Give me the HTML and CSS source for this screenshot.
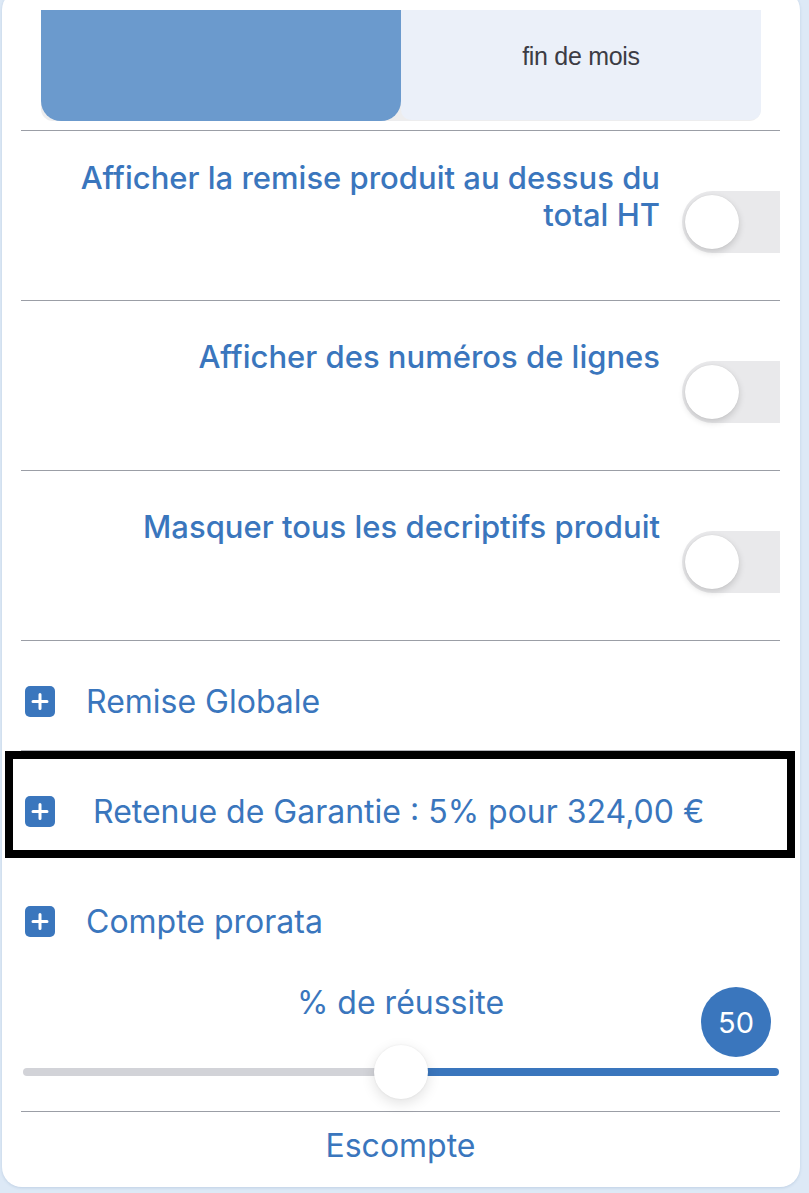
FILE: index.html
```html
<!DOCTYPE html>
<html lang="fr">
<head>
<meta charset="utf-8">
<title>Options</title>
<link rel="stylesheet" href="styles.css">
</head>
<body>
<div class="card">
  <div class="segment">
    <div class="seg seg-active"></div>
    <div class="seg seg-idle">fin de mois</div>
  </div>
  <div class="divider"></div>

  <div class="toggle-row">
    <div class="label label-two">Afficher la remise produit au dessus du total HT</div>
    <div class="switch"><span class="knob"></span></div>
  </div>
  <div class="divider"></div>

  <div class="toggle-row">
    <div class="label">Afficher des numéros de lignes</div>
    <div class="switch"><span class="knob"></span></div>
  </div>
  <div class="divider"></div>

  <div class="toggle-row">
    <div class="label">Masquer tous les decriptifs produit</div>
    <div class="switch"><span class="knob"></span></div>
  </div>
  <div class="divider"></div>

  <div class="plus-row plus-row-first">
    <svg class="plus" viewBox="0 0 30 31" aria-hidden="true"><rect x="0" y="0" width="30" height="31" rx="5" fill="#3a76bd"/><path d="M15 8.5v14M8 15.5h14" stroke="#fff" stroke-width="3" stroke-linecap="round"/></svg>
    <span class="plus-text">Remise Globale</span>
  </div>
  <div class="divider divider-light"></div>

  <div class="plus-row highlight">
    <svg class="plus" viewBox="0 0 30 31" aria-hidden="true"><rect x="0" y="0" width="30" height="31" rx="5" fill="#3a76bd"/><path d="M15 8.5v14M8 15.5h14" stroke="#fff" stroke-width="3" stroke-linecap="round"/></svg>
    <span class="plus-text">Retenue de Garantie : 5% pour 324,00 €</span>
  </div>

  <div class="plus-row plus-row-prorata">
    <svg class="plus" viewBox="0 0 30 31" aria-hidden="true"><rect x="0" y="0" width="30" height="31" rx="5" fill="#3a76bd"/><path d="M15 8.5v14M8 15.5h14" stroke="#fff" stroke-width="3" stroke-linecap="round"/></svg>
    <span class="plus-text">Compte prorata</span>
  </div>

  <div class="slider-block">
    <div class="slider-title">% de réussite</div>
    <div class="badge">50</div>
    <div class="slider">
      <div class="track track-left"></div>
      <div class="track track-right"></div>
      <span class="slider-knob"></span>
    </div>
  </div>
  <div class="divider"></div>

  <div class="footer-title">Escompte</div>
</div>
</body>
</html>
```

FILE: styles.css
```css
html, body {
  margin: 0;
  padding: 0;
}

body {
  background: #dde9f6;
  font-family: Inter, "Noto Sans", sans-serif;
  width: 809px;
  height: 1193px;
  overflow: hidden;
}

.card {
  margin: -10px 9px 0 2px;
  padding: 20px 20px 23px 19px;
  background: #ffffff;
  border-radius: 20px;
  box-shadow: 0 1px 3px rgba(60, 100, 150, 0.18);
}

/* segmented control */
.segment {
  margin: 0 19px 0 20px;
  height: 111px;
  display: flex;
  background: #ededee;
  border-radius: 0 0 12px 12px;
}

.seg {
  flex: 1;
  display: flex;
  align-items: center;
  justify-content: center;
}

.seg-active {
  background: #6b9acd;
  border-radius: 0 0 20px 20px;
}

.seg-idle {
  background: #ebf0f9;
  border-radius: 0 0 10px 10px;
  margin-bottom: 1px;
  padding-bottom: 18px;
  box-sizing: border-box;
  font-family: "Liberation Sans", Arial, sans-serif;
  font-size: 25px;
  letter-spacing: -0.3px;
  color: #3c3c44;
}

.divider {
  height: 1px;
  background: #9b9ea6;
}

.segment + .divider {
  margin-top: 9px;
}

.divider-light {
  background: #b4b5b9;
}

/* toggle rows */
.toggle-row {
  height: 169px;
  display: flex;
  justify-content: flex-end;
  align-items: flex-start;
  gap: 22px;
}

.label {
  margin-top: 37px;
  max-width: 600px;
  text-align: right;
  font-size: 31px;
  line-height: 37px;
  font-weight: 500;
  color: #3a76bd;
}

.label-two {
  margin-top: 28px;
}

.switch {
  margin-top: 60px;
  width: 98px;
  height: 62px;
  flex: none;
  background: #e9e9eb;
  border-radius: 31px 0 0 31px;
  display: flex;
  align-items: center;
  padding-left: 3px;
  box-sizing: border-box;
}

.knob {
  width: 54px;
  height: 54px;
  border-radius: 50%;
  background: #ffffff;
  box-shadow: 0 3px 7px rgba(0, 0, 0, 0.16), 0 0 1px rgba(0, 0, 0, 0.12);
}

/* plus rows */
.plus-row {
  display: flex;
  align-items: center;
  padding-left: 4px;
}

.plus {
  width: 30px;
  height: 31px;
  flex: none;
  display: block;
}

.plus-text {
  margin-left: 31px;
  font-size: 32px;
  line-height: 31px;
  font-weight: 400;
  color: #3a76bd;
}

.plus-row-first {
  height: 109px;
  align-items: flex-start;
  padding-top: 45px;
  box-sizing: border-box;
}

.highlight {
  margin: 0 -15px 0 -16px;
  height: 107px;
  box-sizing: border-box;
  border: 8px solid #000000;
  padding: 37px 0 0 12px;
  align-items: flex-start;
}

.highlight .plus-text {
  margin-left: 38px;
}

.plus-row-prorata {
  margin-top: 48px;
}

/* slider */
.slider-block {
  position: relative;
  padding-top: 47px;
}

.slider-title {
  text-align: center;
  font-size: 32px;
  line-height: 37px;
  color: #3a76bd;
}

.badge {
  position: absolute;
  right: 9px;
  top: 50px;
  width: 70px;
  height: 70px;
  border-radius: 50%;
  background: #3a76bd;
  color: #ffffff;
  font-size: 29px;
  display: flex;
  align-items: center;
  justify-content: center;
}

.slider {
  position: relative;
  margin: 24px 0 12px;
  height: 54px;
  display: flex;
  align-items: center;
}

.track {
  height: 8px;
  flex: 1;
}

.track-left {
  background: #d2d3d8;
  border-radius: 4px 0 0 4px;
  margin-left: 2px;
}

.track-right {
  background: #3a76bd;
  border-radius: 0 4px 4px 0;
  margin-right: 1px;
}

.slider-knob {
  position: absolute;
  left: calc(50% - 27px);
  top: 0;
  width: 54px;
  height: 54px;
  border-radius: 50%;
  background: #ffffff;
  box-shadow: 0 4px 14px rgba(0, 0, 0, 0.12), 0 0 2px rgba(0, 0, 0, 0.08);
}

.footer-title {
  padding-top: 15px;
  text-align: center;
  font-size: 32px;
  line-height: 37px;
  color: #3a76bd;
}
```
